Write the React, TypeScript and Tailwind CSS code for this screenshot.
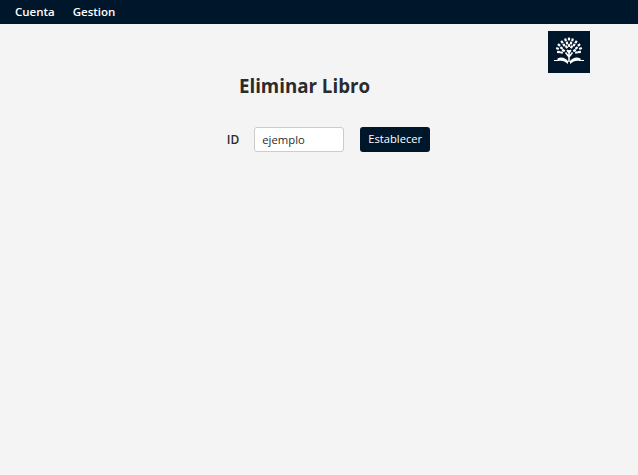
const crown = [
  [15, 2, 0], [11.5, 2.800, -15], [18.500, 2.800, 15], [8, 5, -35], [22, 5, 35], [5, 8, -50], [25, 8, 50],
  [3.500, 11.500, -70], [26.500, 11.500, 70], [13, 6, -10], [17, 6, 10], [10, 8, -35], [20, 8, 35],
  [7.500, 11, -55], [22.500, 11, 55], [4.500, 15, -85], [25.500, 15, 85], [15, 8.500, 0], [12.500, 10, -25], [17.500, 10, 25],
  [9.500, 13.500, -60], [20.500, 13.500, 60], [7.500, 15.500, -80], [22.500, 15.500, 80],
];

export default function App() {
  return (
    <div className="min-h-[475px] bg-[#f4f4f4] font-['Open_Sans','Noto_Sans',sans-serif] text-[#2b2b2b]">
      <nav className="h-6 bg-[#00172b] flex items-center gap-[18px] pl-[15px] text-white text-[11.5px] font-semibold">
        <span>Cuenta</span>
        <span>Gestion</span>
      </nav>
      <div className="flex justify-end pr-12 pt-[7px]">
        <div className="w-[42px] h-[42px] bg-[#00172b] flex items-center justify-center">
          <svg width="30" height="30" viewBox="0 0 30 30" fill="none" stroke="white" strokeLinecap="butt">
            {crown.map(([x, y, r], i) => (
              <rect key={i} x={x - 1.1} y={y - 1.4} width="2.200" height="2.800" fill="white" stroke="none" transform={`rotate(${r} ${x} ${y})`} />
            ))}
            <path d="M15 25v-12M15 20l-3.500-4.500M15 20l3.500-4.500M15 16l-2-3M15 16l2-3" strokeWidth="1.500" />
            <path d="M0 23.500h5M25 23.500h5" strokeWidth="1.200" />
            <path d="M3.500 21.500c4-2 7.500-1 10.500 2.500v3c-3-3-6.500-4-10.500-3zM26.500 21.500c-4-2-7.500-1-10.500 2.500v3c3-3 6.500-4 10.500-3z" fill="white" stroke="none" />
          </svg>
        </div>
      </div>
      <h1 className="text-[18.72px] font-bold text-center w-[609px] mt-[1px] leading-[24px]">Eliminar Libro</h1>
      <div className="flex items-center justify-center w-[657px] mt-[29px] text-[12px]">
        <label className="font-semibold mr-[15px]">ID</label>
        <input
          defaultValue="ejemplo"
          className="w-[90px] h-[25px] bg-white border border-[#ccc] rounded-[3px] px-[7px] text-[11.3px] mr-4 outline-none"
        />
        <button className="h-[25px] w-[70px] bg-[#00172b] text-white rounded-[3px] text-[11.2px]">Establecer</button>
      </div>
    </div>
  );
}
